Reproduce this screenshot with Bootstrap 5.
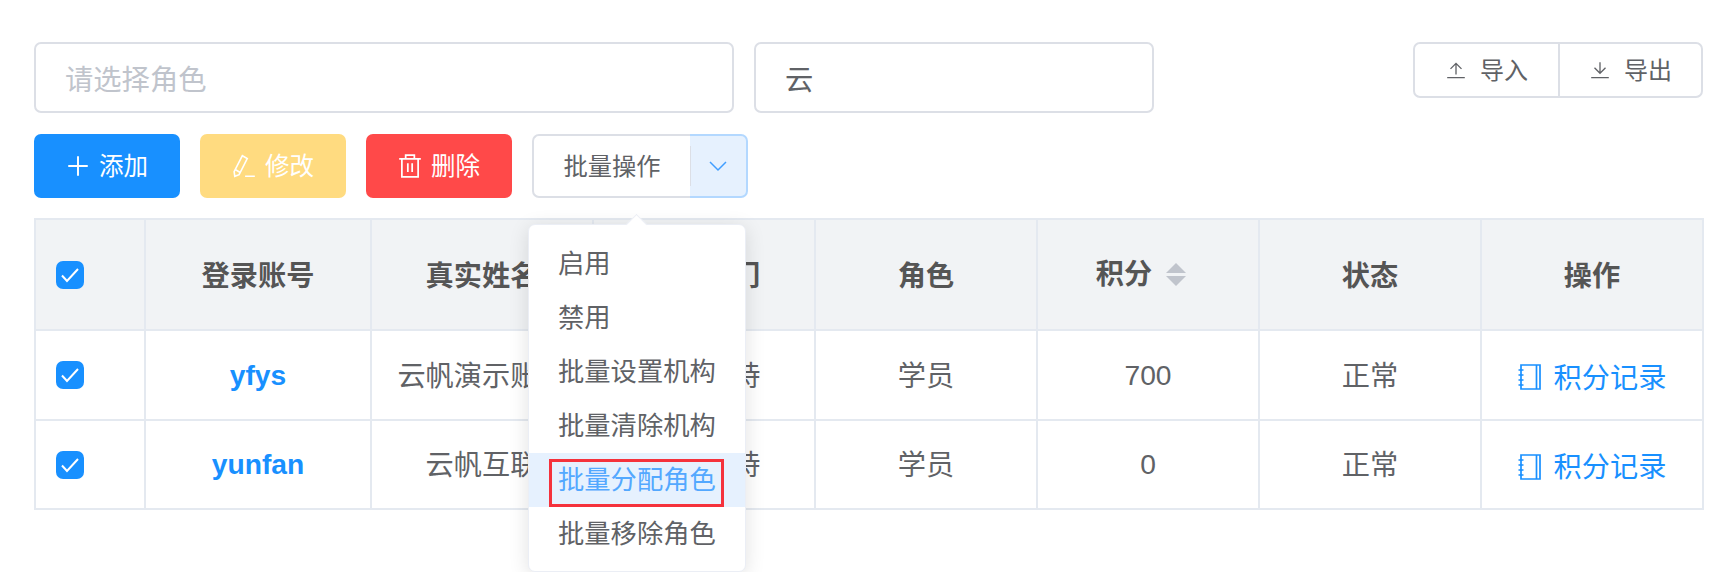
<!DOCTYPE html>
<html lang="zh-CN">
<head>
    <meta charset="UTF-8">
    <meta name="viewport" content="width=device-width, initial-scale=1.0">
    <title>积分管理</title>
    <link href="https://cdn.jsdelivr.net/npm/bootstrap@5.3.0/dist/css/bootstrap.min.css" rel="stylesheet">
    <style>
        html, body { height: 572px; }
        body {
            font-family: "Liberation Sans", "Noto Sans CJK SC", sans-serif;
            color: #606266;
            background: #fff;
        }
        .page-wrap { padding: 42px 23px 0 34px; min-height: 572px; }

        /* filters */
        .filter-row { height: 71px; margin-bottom: 21px; gap: 20px; }
        .filter-input {
            height: 71px;
            border: 2px solid #dcdfe6;
            border-radius: 7px;
            font-family: "Noto Sans CJK SC", sans-serif;
            font-size: 28.3px;
            line-height: normal;
            color: #606266;
            padding: 0 29px;
        }
        .filter-input::placeholder { color: #c0c4cc; opacity: 1; }
        .role-input { width: 700px; }
        .word-input { width: 400px; }

        .io-group { height: 56px; border: 2px solid #dcdfe6; border-radius: 7px; }
        .io-btn {
            width: 143px;
            color: #606266;
            font-size: 24px;
            line-height: 1;
            gap: 13px;
            text-decoration: none;
        }
        .io-btn span { padding-top: 2px; }
        .io-btn + .io-btn { border-left: 2px solid #dcdfe6; }
        .io-btn svg { width: 22px; height: 22px; }

        /* toolbar */
        .tool-row { height: 64px; margin-bottom: 20px; gap: 20px; }
        .tool-btn {
            width: 146px;
            height: 64px;
            border: 0;
            border-radius: 7px;
            color: #fff;
            font-size: 24.5px;
            line-height: 1;
            gap: 9px;
        }
        .tool-btn span { padding-top: 3px; }
        .tool-btn svg { width: 24px; height: 26px; }
        .tool-add { background: #1890ff; }
        .tool-edit { background: #ffdb80; }
        .tool-del { background: #ff4949; }

        .split-wrap { width: 216px; height: 64px; }
        .split-main {
            position: relative;
            width: 158px;
            padding-top: 3px;
            border: 2px solid #dcdfe6;
            border-right: 0;
            border-radius: 7px 0 0 7px;
            font-size: 24.3px;
            line-height: 1;
            color: #606266;
            background: #fff;
        }
        .split-main::after {
            content: "";
            position: absolute;
            right: -1px;
            top: 10px;
            bottom: 10px;
            width: 1px;
            background: #dcdfe6;
        }
        .split-arrow {
            width: 58px;
            background: #e6f1fe;
            border: 2px solid #b3d8ff;
            border-left: 0;
            border-radius: 0 7px 7px 0;
        }
        .split-arrow svg { width: 20px; height: 20px; }

        /* dropdown */
        .batch-menu {
            position: absolute;
            left: -4px;
            top: 90px;
            width: 218px;
            height: 348px;
            padding: 12px 0;
            background: #fff;
            border: 1px solid #ebeef5;
            border-radius: 7px;
            box-shadow: 0 4px 20px rgba(0, 0, 0, .12);
            z-index: 10;
            list-style: none;
            margin: 0;
        }
        .batch-menu::before {
            content: "";
            position: absolute;
            left: 100px;
            top: -8px;
            width: 15px;
            height: 15px;
            background: #fff;
            border-left: 1px solid #ebeef5;
            border-top: 1px solid #ebeef5;
            transform: rotate(45deg);
        }
        .batch-item {
            position: relative;
            height: 54px;
            line-height: 54px;
            padding-left: 29px;
            font-size: 26.3px;
            white-space: nowrap;
        }
        .batch-item.is-hover { background: #e6f1fe; color: #53a8ff; }
        .mark-box {
            position: absolute;
            left: 20px;
            top: 6px;
            width: 175px;
            height: 48px;
            border: 3px solid #f5323c;
        }

        /* table */
        .score-table {
            table-layout: fixed;
            width: 1667px;
            margin: 0;
            border-color: #e4e9f0;
            font-size: 28.2px;
        }
        .score-table > :not(caption) > * > * {
            border-width: 2px;
            padding: 2px 0 0;
            color: #606266;
            vertical-align: middle;
            text-align: center;
            box-shadow: none;
        }
        .score-table > tbody > tr > td.plain-cell { padding-top: 0; }
        .score-table thead tr { height: 111px; }
        .score-table tbody tr:first-child { height: 90px; }
        .score-table tbody tr:last-child { height: 89px; }
        .score-table > thead > tr > th { background: #f1f3f5; color: #555; font-weight: 700; padding-top: 3px; }
        .score-table > thead > tr > th:first-child { padding-top: 0; }
        .col-check { width: 110px; }
        .col-user { width: 226px; }
        .col-std { width: 222px; }
        .pick-box {
            display: block;
            width: 28px;
            height: 28px;
            margin: 0 0 0 20px;
            border: 0;
            border-radius: 4px;
            background-color: #1890ff;
            background-size: 28px 28px;
        }
        .pick-box:checked {
            background-color: #1890ff;
            background-image: url("data:image/svg+xml,%3Csvg xmlns='http://www.w3.org/2000/svg' viewBox='0 0 28 28'%3E%3Cpath d='M6 14.5l5 5.5 11-12' fill='none' stroke='%23fff' stroke-width='2'/%3E%3C/svg%3E");
        }
        .user-link { color: #1890ff; font-weight: 700; text-decoration: none; }
        .log-link { color: #1890ff; text-decoration: none; gap: 12px; line-height: 1; vertical-align: middle; }
        .log-link span { padding-top: 1px; }
        .log-link svg { width: 24px; height: 28px; }
        .head-sort { gap: 14px; position: relative; top: -3px; padding-right: 14px; vertical-align: middle; }
        .sort-carets { width: 20px; gap: 3px; }
        .sort-carets span {
            width: 0;
            height: 0;
            border-left: 10px solid transparent;
            border-right: 10px solid transparent;
        }
        .sort-carets .caret-up { border-bottom: 10px solid #c0c4cc; }
        .sort-carets .caret-down { border-top: 10px solid #c0c4cc; }
    </style>
</head>
<body>

<div class="page-wrap">
    <!-- Filters -->
    <div class="filter-row d-flex align-items-start">
        <input class="form-control filter-input role-input flex-shrink-0" type="text" placeholder="请选择角色">
        <input class="form-control filter-input word-input flex-shrink-0" type="text" value="云">
        <div class="io-group d-flex ms-auto">
            <a class="io-btn d-flex align-items-center justify-content-center">
                <svg viewBox="0 0 20 20" fill="none" stroke="#606266" stroke-width="1.2"><path d="M2 17h16M10 14V4M5 9l5-5 5 5"/></svg>
                <span>导入</span>
            </a>
            <a class="io-btn d-flex align-items-center justify-content-center">
                <svg viewBox="0 0 20 20" fill="none" stroke="#606266" stroke-width="1.2"><path d="M2 17h16M10 3v10M5 8l5 5 5-5"/></svg>
                <span>导出</span>
            </a>
        </div>
    </div>

    <!-- Toolbar -->
    <div class="tool-row d-flex">
        <button class="tool-btn tool-add d-flex align-items-center justify-content-center" type="button">
            <svg viewBox="0 0 22 24" fill="none" stroke="#fff" stroke-width="1.8"><path d="M11 3v18M2 12h18"/></svg>
            <span>添加</span>
        </button>
        <button class="tool-btn tool-edit d-flex align-items-center justify-content-center" type="button">
            <svg viewBox="0 0 22 24" fill="none" stroke="#fff" stroke-width="1.5"><path d="M9.5 2.5l4.5 2.6L6.5 20l-4 1.5-.6-4.3zM2.5 15l5 3M12 21.5h9"/></svg>
            <span>修改</span>
        </button>
        <button class="tool-btn tool-del d-flex align-items-center justify-content-center" type="button">
            <svg viewBox="0 0 22 24" fill="none" stroke="#fff" stroke-width="1.6"><path d="M1 5.5h20M7 5.5V2h8v3.5M3.5 5.5V22h15V5.5M9 9.5v8M13 9.5v8"/></svg>
            <span>删除</span>
        </button>

        <div class="split-wrap d-flex position-relative">
            <div class="split-main d-flex align-items-center justify-content-center">批量操作</div>
            <div class="split-arrow d-flex align-items-center justify-content-center">
                <svg viewBox="0 0 20 20" fill="none" stroke="#409eff" stroke-width="1.5"><path d="M2 6l8 8 8-8"/></svg>
            </div>
            <ul class="batch-menu">
                <li class="batch-item">启用</li>
                <li class="batch-item">禁用</li>
                <li class="batch-item">批量设置机构</li>
                <li class="batch-item">批量清除机构</li>
                <li class="batch-item is-hover">批量分配角色<span class="mark-box"></span></li>
                <li class="batch-item">批量移除角色</li>
            </ul>
        </div>
    </div>

    <!-- Table -->
    <table class="table table-bordered score-table">
        <colgroup>
            <col class="col-check"><col class="col-user">
            <col class="col-std"><col class="col-std"><col class="col-std">
            <col class="col-std"><col class="col-std"><col class="col-std">
        </colgroup>
        <thead>
            <tr>
                <th><input class="form-check-input pick-box" type="checkbox" checked></th>
                <th>登录账号</th>
                <th>真实姓名</th>
                <th>所属部门</th>
                <th>角色</th>
                <th>
                    <div class="head-sort d-inline-flex align-items-center">
                        <span>积分</span>
                        <span class="sort-carets d-flex flex-column"><span class="caret-up"></span><span class="caret-down"></span></span>
                    </div>
                </th>
                <th>状态</th>
                <th>操作</th>
            </tr>
        </thead>
        <tbody>
            <tr>
                <td class="plain-cell"><input class="form-check-input pick-box" type="checkbox" checked></td>
                <td class="plain-cell"><a class="user-link" href="#">yfys</a></td>
                <td>云帆演示账号</td>
                <td>技术支持</td>
                <td>学员</td>
                <td class="plain-cell">700</td>
                <td>正常</td>
                <td class="plain-cell">
                    <a class="log-link d-inline-flex align-items-center" href="#">
                        <svg viewBox="0 0 24 28" fill="none" stroke="#1890ff" stroke-width="1.7"><path d="M3 2h19v24H3zM18.500 2v24M0.500 7h5M0.500 12h5M0.500 17h5M0.500 22h5"/></svg>
                        <span>积分记录</span>
                    </a>
                </td>
            </tr>
            <tr>
                <td class="plain-cell"><input class="form-check-input pick-box" type="checkbox" checked></td>
                <td class="plain-cell"><a class="user-link" href="#">yunfan</a></td>
                <td>云帆互联</td>
                <td>技术支持</td>
                <td>学员</td>
                <td class="plain-cell">0</td>
                <td>正常</td>
                <td class="plain-cell">
                    <a class="log-link d-inline-flex align-items-center" href="#">
                        <svg viewBox="0 0 24 28" fill="none" stroke="#1890ff" stroke-width="1.7"><path d="M3 2h19v24H3zM18.500 2v24M0.500 7h5M0.500 12h5M0.500 17h5M0.500 22h5"/></svg>
                        <span>积分记录</span>
                    </a>
                </td>
            </tr>
        </tbody>
    </table>
</div>

<script src="https://cdn.jsdelivr.net/npm/bootstrap@5.3.0/dist/js/bootstrap.bundle.min.js"></script>
</body>
</html>
